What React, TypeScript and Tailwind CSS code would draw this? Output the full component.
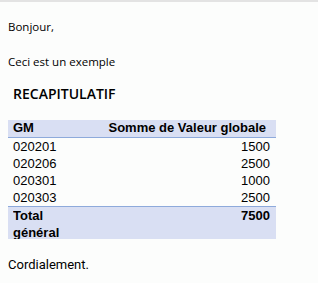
const rows = [
  { gm: "020201", val: "1500" },
  { gm: "020206", val: "2500" },
  { gm: "020301", val: "1000" },
  { gm: "020303", val: "2500" },
];

export default function App() {
  return (
    <div className="w-[318px] h-[283px] bg-[#fcfdfc] border-t-2 border-[#e3e3e3] text-black overflow-hidden">
      <p className="pl-2 pt-[17px] text-[11.5px] leading-[16px] font-['Open_Sans',sans-serif]">
        Bonjour,
      </p>
      <p className="pl-2 pt-[19px] text-[11.5px] leading-[16px] font-['Open_Sans',sans-serif]">
        Ceci est un exemple
      </p>
      <h3 className="pl-[13px] pt-[15px] text-[14px] leading-[18px] font-semibold font-['Open_Sans',sans-serif]">
        RECAPITULATIF
      </h3>
      <table className="ml-2 mt-[17px] w-[268px] border-collapse text-[13px] font-['Liberation_Sans',Arial,sans-serif]">
        <thead>
          <tr className="bg-[#d9dff3] border-b border-[#8eaadb]">
            <th className="w-[70px] h-[17px] pl-[5px] p-0 text-left font-bold leading-[16px]">GM</th>
            <th className="h-[17px] pr-[10px] p-0 text-right font-bold leading-[16px]">
              Somme de Valeur globale
            </th>
          </tr>
        </thead>
        <tbody>
          {rows.map((r) => (
            <tr key={r.gm}>
              <td className="h-[17px] pl-[5px] p-0 leading-[17px]">{r.gm}</td>
              <td className="h-[17px] pr-[6px] p-0 text-right leading-[17px]">{r.val}</td>
            </tr>
          ))}
          <tr className="bg-[#d9dff3] border-t border-[#8eaadb]">
            <td className="pl-[5px] p-0 font-bold leading-[17px] align-top">
              <div className="h-[32px] overflow-hidden">Total général</div>
            </td>
            <td className="pr-[6px] p-0 text-right font-bold leading-[17px] align-top">7500</td>
          </tr>
        </tbody>
      </table>
      <p className="pl-2 pt-[18px] text-[13px] leading-[16px] font-['Roboto',sans-serif]">
        Cordialement.
      </p>
    </div>
  );
}
